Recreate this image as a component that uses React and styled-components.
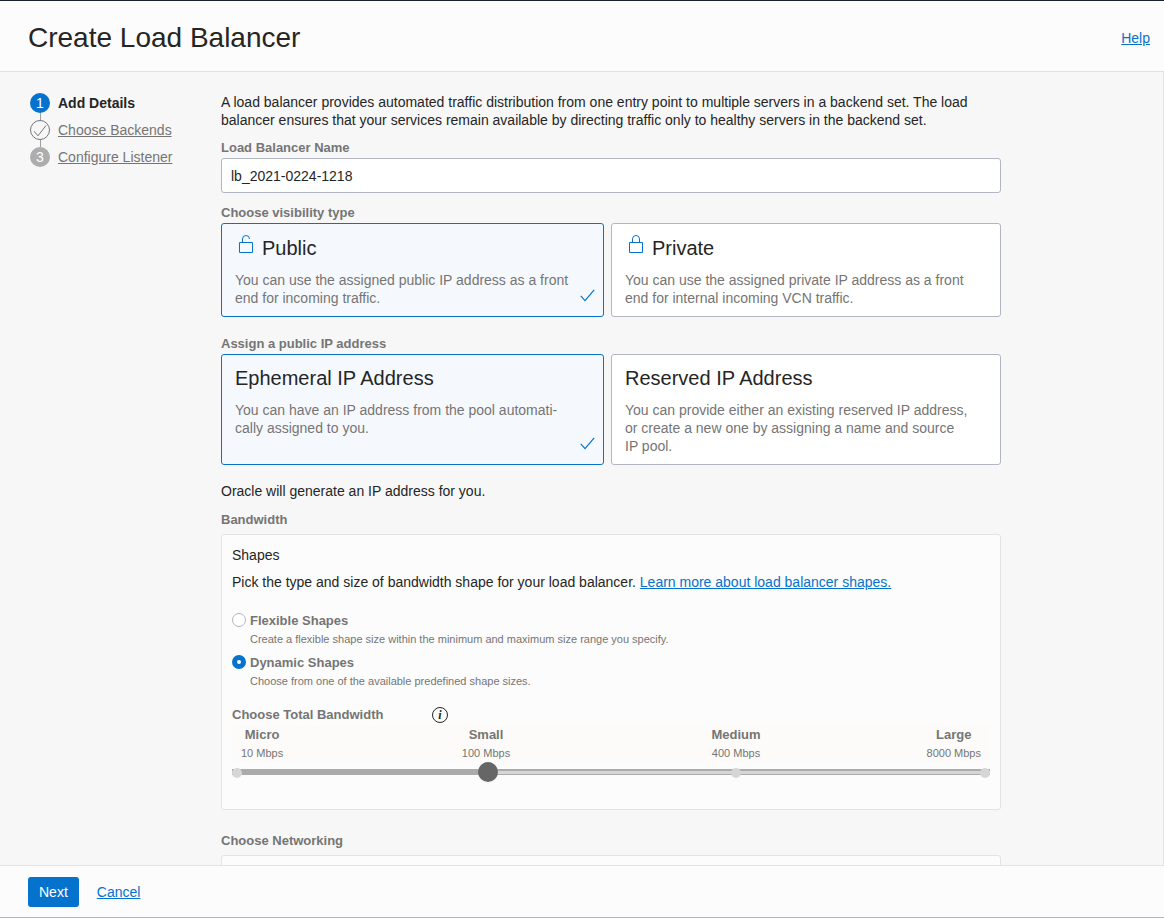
import React, { useState } from "react";
import styled, { createGlobalStyle, css } from "styled-components";

const blue = "#0572ce";
const ink = "#252525";
const muted = "#757575";

const GlobalStyle = createGlobalStyle`
  *, *::before, *::after { box-sizing: border-box; }
  body {
    margin: 0;
    background: #f7f7f7;
    color: ${ink};
    font: 14px/18px "Liberation Sans", Arial, sans-serif;
  }
  h1, h2, p, ol, fieldset { margin: 0; padding: 0; border: 0; min-width: 0; }
`;

const Page = styled.div`
  display: flex;
  flex-direction: column;
  height: 100vh;
  border-top: 1px solid #1c2130;
  border-bottom: 1px solid #b4b4b8;
`;

const Header = styled.header`
  display: flex;
  align-items: center;
  justify-content: space-between;
  padding: 20px 14px 16px 28px;
  background: #fcfcfc;
  border-bottom: 1px solid #e3e3e3;
`;

const PageTitle = styled.h1`
  font-size: 28px;
  line-height: 34px;
  font-weight: 400;
`;

const Link = styled.a`
  color: ${blue};
  text-decoration: underline;
`;

const Body = styled.div`
  flex: 1;
  min-height: 0;
  display: flex;
  padding: 21px 20px 0 30px;
  overflow-y: auto;
  scrollbar-width: none;
  border-right: 1px solid #e3e3e3;
`;

const Steps = styled.ol`
  flex: 0 0 191px;
  list-style: none;
`;

const Step = styled.li`
  display: flex;
  align-items: center;
  gap: 8px;
  font-weight: ${(p) => (p.$current ? 700 : 400)};
`;

const Connector = styled.li`
  width: 1px;
  height: 7px;
  margin-left: 10px;
  background: #a0a0a0;
`;

const StepBadge = styled.span`
  display: flex;
  align-items: center;
  justify-content: center;
  width: 20px;
  height: 20px;
  border-radius: 50%;
  font-weight: 400;
  color: #fff;
  background: ${(p) => (p.$current ? blue : "#adadad")};
  ${(p) =>
    p.$done &&
    css`
      background: transparent;
      border: 1px solid ${muted};
    `}
`;

const StepLink = styled.a`
  color: ${muted};
  text-decoration: underline;
`;

const Form = styled.form`
  flex: 1;
  max-width: 780px;
`;

const labelText = css`
  color: ${muted};
  font-size: 13px;
  line-height: 18px;
  font-weight: 700;
`;

const Label = styled.label`
  display: block;
  ${labelText}
`;

const Legend = styled.legend`
  padding: 0;
  ${labelText}
`;

const Field = styled.div`
  margin-top: 10px;
`;

const TextInput = styled.input`
  display: block;
  width: 100%;
  height: 35px;
  margin-top: 1px;
  padding: 0 9px;
  border: 1px solid #b2b6c2;
  border-radius: 3px;
  background: #fff;
  color: ${ink};
  font: inherit;
`;

const ChoiceGroup = styled.fieldset`
  && { margin-top: ${(p) => p.$gap}px; }
`;

const Choices = styled.div`
  display: grid;
  grid-template-columns: 383fr 390fr;
  gap: 7px;
  margin-top: 1px;
`;

const ChoiceCard = styled.label`
  position: relative;
  display: block;
  padding: 11px 32px 9px 13px;
  border: 1px solid ${(p) => (p.$selected ? blue : "#b2b6c2")};
  border-radius: 3px;
  background: ${(p) => (p.$selected ? "#f5f9fe" : "#fff")};
  cursor: pointer;
`;

const HiddenRadio = styled.input`
  position: absolute;
  inset: 0;
  opacity: 0;
  margin: 0;
`;

const ChoiceTitle = styled.span`
  display: flex;
  align-items: flex-start;
  gap: 9px;
  font-size: 20px;
  line-height: 24px;

  svg { margin: 0 0 6px 4px; }
  svg + span { align-self: flex-end; }
`;

const ChoiceText = styled.span`
  display: block;
  margin-top: 11px;
  color: ${muted};
`;

const CardCheck = styled.svg`
  position: absolute;
  right: 8px;
  bottom: 14px;
`;

const Note = styled.p`
  && { margin-top: 17px; }
`;

const PanelGroup = styled.fieldset`
  && { margin-top: ${(p) => p.$gap}px; }
`;

const Panel = styled.div`
  margin-top: 5px;
  padding: 11px 10px 27px;
  border: 1px solid #e3e3e3;
  border-radius: 3px;
  background: #fcfcfc;
`;

const PanelTitle = styled.h2`
  font-size: 14px;
  line-height: 18px;
  font-weight: 400;
`;

const PanelText = styled.p`
  && { margin: 9px 0 21px; }
`;

const RadioRow = styled.div`
  display: grid;
  grid-template-columns: 14px 1fr;
  column-gap: 4px;
  margin-bottom: 6px;
`;

const Radio = styled.input`
  appearance: none;
  width: 14px;
  height: 14px;
  margin: 1px 0 0;
  border: 1px solid #b2b6c2;
  border-radius: 50%;
  background: #fff;

  &:checked {
    border: 5px solid ${blue};
  }
`;

const Hint = styled.span`
  grid-column: 2;
  color: ${muted};
  font-size: 11px;
  line-height: 18px;
`;

const BandwidthHead = styled.div`
  display: flex;
  align-items: center;
  margin-top: 16px;
  height: 18px;

  label { flex: 0 0 200px; }
`;

const InfoButton = styled.button`
  display: flex;
  align-items: center;
  justify-content: center;
  width: 16px;
  height: 16px;
  padding: 0;
  border: 1px solid ${ink};
  border-radius: 50%;
  background: transparent;
  color: ${ink};
  font: italic 700 12px/14px "Liberation Serif", serif;
`;

const Scale = styled.div`
  display: grid;
  grid-template-columns: 129fr 250fr 250fr 129fr;
  justify-items: center;
  padding-top: 2px;
  background: #fcfbf9;
`;

const ScaleMark = styled.div`
  padding: 0 9px;
  text-align: center;
  color: ${muted};

  &:first-child { justify-self: start; }
  &:last-child { justify-self: end; }
`;

const ScaleName = styled.div`
  ${labelText}
`;

const ScaleSpeed = styled.div`
  font-size: 11px;
  line-height: 18px;
`;

const Slider = styled.div`
  display: grid;
  align-items: center;
  height: 20px;

  > * { grid-area: 1 / 1; }
`;

const Rail = styled.div`
  height: 6px;
  background: linear-gradient(#ababab 0 2px, #d6d6d6 2px 5px, #ababab 5px);
`;

const RailFill = styled.div`
  height: 100%;
  background: #ababab;
`;

const Stops = styled.div`
  display: flex;
  justify-content: space-between;
  padding-top: 1px;
`;

const Stop = styled.span`
  width: 10px;
  height: 10px;
  border-radius: 50%;
  background: #d6d6d6;
`;

const thumb = css`
  appearance: none;
  width: 20px;
  height: 20px;
  border: 0;
  border-radius: 50%;
  background: #666;
`;

const RangeInput = styled.input`
  appearance: none;
  z-index: 1;
  width: 100%;
  height: 20px;
  margin: 0;
  background: transparent;

  &::-webkit-slider-thumb { ${thumb} }
  &::-moz-range-thumb { ${thumb} }
`;

const Footer = styled.footer`
  display: flex;
  align-items: center;
  gap: 18px;
  padding: 11px 28px 10px;
  border-top: 1px solid #e3e3e3;
  background: #fcfcfc;
`;

const PrimaryButton = styled.button`
  height: 30px;
  padding: 0 11px;
  border: 0;
  border-radius: 3px;
  background: ${blue};
  color: #fff;
  font: inherit;
`;

const LockIcon = ({ open }) => (
  <svg width="14" height="19" viewBox="0 0 14 19" fill="none" stroke={blue} aria-hidden="true">
    <path d="M.5 7.5h13v10H.5z" />
    <path d={open ? "M3.5 7.5V4a3.5 3.5 0 0 1 7 0" : "M3.5 7.5V4a3.5 3.5 0 0 1 7 0v3.5"} />
  </svg>
);

const Choice = ({ name, title, icon, selected, onSelect, children }) => (
  <ChoiceCard $selected={selected}>
    <HiddenRadio type="radio" name={name} checked={selected} onChange={onSelect} />
    <ChoiceTitle>
      {icon}
      <span>{title}</span>
    </ChoiceTitle>
    <ChoiceText>{children}</ChoiceText>
    {selected && (
      <CardCheck width="15" height="13" viewBox="0 0 15 13" fill="none" stroke={blue} strokeWidth="1.2" aria-hidden="true">
        <path d="M.8 6.8 5 11.6 14.2.8" />
      </CardCheck>
    )}
  </ChoiceCard>
);

const sizes = [
  ["Micro", "10 Mbps"],
  ["Small", "100 Mbps"],
  ["Medium", "400 Mbps"],
  ["Large", "8000 Mbps"],
];

export default function App() {
  const [visibility, setVisibility] = useState("public");
  const [address, setAddress] = useState("ephemeral");
  const [shape, setShape] = useState("dynamic");
  const [size, setSize] = useState(1);

  return (
    <>
      <GlobalStyle />
      <Page>
        <Header>
          <PageTitle>Create Load Balancer</PageTitle>
          <Link href="#help">Help</Link>
        </Header>
        <Body>
          <Steps>
            <Step $current>
              <StepBadge $current>1</StepBadge>
              Add Details
            </Step>
            <Connector aria-hidden="true" />
            <Step>
              <StepBadge $done>
                <svg width="14" height="13" viewBox="0 0 14 13" fill="none" stroke={muted} aria-hidden="true">
                  <path d="M1 7.2 5 11.8 13 1.5" />
                </svg>
              </StepBadge>
              <StepLink href="#backends">Choose Backends</StepLink>
            </Step>
            <Connector aria-hidden="true" />
            <Step>
              <StepBadge>3</StepBadge>
              <StepLink href="#listener">Configure Listener</StepLink>
            </Step>
          </Steps>

          <Form id="details" onSubmit={(e) => e.preventDefault()}>
            <p>
              A load balancer provides automated traffic distribution from one entry point to multiple
              servers in a backend set. The load balancer ensures that your services remain available by
              directing traffic only to healthy servers in the backend set.
            </p>

            <Field>
              <Label htmlFor="lb-name">Load Balancer Name</Label>
              <TextInput id="lb-name" type="text" defaultValue="lb_2021-0224-1218" />
            </Field>

            <ChoiceGroup $gap={11}>
              <Legend>Choose visibility type</Legend>
              <Choices>
                <Choice
                  name="visibility"
                  title="Public"
                  icon={<LockIcon open />}
                  selected={visibility === "public"}
                  onSelect={() => setVisibility("public")}
                >
                  You can use the assigned public IP address as a front end for incoming traffic.
                </Choice>
                <Choice
                  name="visibility"
                  title="Private"
                  icon={<LockIcon />}
                  selected={visibility === "private"}
                  onSelect={() => setVisibility("private")}
                >
                  You can use the assigned private IP address as a front end for internal incoming VCN traffic.
                </Choice>
              </Choices>
            </ChoiceGroup>

            <ChoiceGroup $gap={18}>
              <Legend>Assign a public IP address</Legend>
              <Choices>
                <Choice
                  name="address"
                  title="Ephemeral IP Address"
                  selected={address === "ephemeral"}
                  onSelect={() => setAddress("ephemeral")}
                >
                  You can have an IP address from the pool automati{"\u00ad"}cally assigned to you.
                </Choice>
                <Choice
                  name="address"
                  title="Reserved IP Address"
                  selected={address === "reserved"}
                  onSelect={() => setAddress("reserved")}
                >
                  You can provide either an existing reserved IP address, or create a new one by assigning a
                  name and source IP pool.
                </Choice>
              </Choices>
            </ChoiceGroup>

            <Note>Oracle will generate an IP address for you.</Note>

            <PanelGroup $gap={11}>
              <Legend>Bandwidth</Legend>
              <Panel>
                <PanelTitle>Shapes</PanelTitle>
                <PanelText>
                  Pick the type and size of bandwidth shape for your load balancer.{" "}
                  <Link href="#shapes">Learn more about load balancer shapes.</Link>
                </PanelText>
                <RadioRow>
                  <Radio id="flexible" type="radio" name="shape" checked={shape === "flexible"} onChange={() => setShape("flexible")} />
                  <Label htmlFor="flexible">Flexible Shapes</Label>
                  <Hint>Create a flexible shape size within the minimum and maximum size range you specify.</Hint>
                </RadioRow>
                <RadioRow>
                  <Radio id="dynamic" type="radio" name="shape" checked={shape === "dynamic"} onChange={() => setShape("dynamic")} />
                  <Label htmlFor="dynamic">Dynamic Shapes</Label>
                  <Hint>Choose from one of the available predefined shape sizes.</Hint>
                </RadioRow>

                <BandwidthHead>
                  <Label htmlFor="bandwidth">Choose Total Bandwidth</Label>
                  <InfoButton type="button" aria-label="About total bandwidth">i</InfoButton>
                </BandwidthHead>
                <Scale>
                  {sizes.map(([name, speed]) => (
                    <ScaleMark key={name}>
                      <ScaleName>{name}</ScaleName>
                      <ScaleSpeed>{speed}</ScaleSpeed>
                    </ScaleMark>
                  ))}
                </Scale>
                <Slider>
                  <Rail>
                    <RailFill style={{ width: `${(size / 3) * 100}%` }} />
                  </Rail>
                  <Stops>
                    {sizes.map(([name]) => (
                      <Stop key={name} />
                    ))}
                  </Stops>
                  <RangeInput
                    id="bandwidth"
                    type="range"
                    min="0"
                    max="3"
                    value={size}
                    onChange={(e) => setSize(Number(e.target.value))}
                  />
                </Slider>
              </Panel>
            </PanelGroup>

            <PanelGroup $gap={22}>
              <Legend>Choose Networking</Legend>
              <Panel />
            </PanelGroup>
          </Form>
        </Body>
        <Footer>
          <PrimaryButton type="submit" form="details">Next</PrimaryButton>
          <Link href="#cancel">Cancel</Link>
        </Footer>
      </Page>
    </>
  );
}
